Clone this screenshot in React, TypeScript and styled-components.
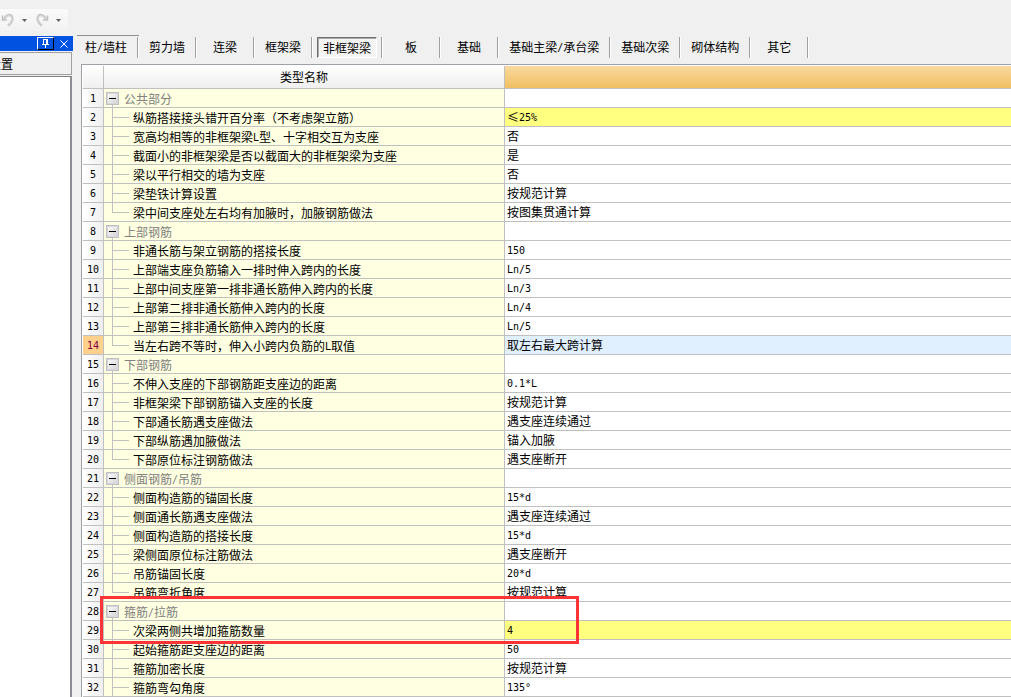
import React from "react";
import styled, { createGlobalStyle, css } from "styled-components";

const line = "#c0c0c0";

const GlobalStyle = createGlobalStyle`
  *, *::before, *::after { box-sizing: border-box; }
  body {
    margin: 0;
    background: #f0f0f0;
    color: #000;
    font: 12px/18px "Noto Sans CJK SC", sans-serif;
  }
  button {
    font: inherit;
    color: inherit;
    margin: 0;
    padding: 0;
    border: 0;
    background: none;
  }
`;

const Page = styled.div`
  display: flex;
  flex-direction: column;
  min-height: 100vh;
  overflow: hidden;
`;

const TopStrip = styled.header`
  height: 35px;
  padding-top: 9px;
`;

const Toolbar = styled.div`
  display: flex;
  align-items: center;
  width: 68px;
  height: 22px;
  background: linear-gradient(#fafafa, #f2f2f2);
  border-radius: 0 2px 2px 0;
`;

const ToolButton = styled.button<{ $narrow?: boolean }>`
  display: flex;
  align-items: center;
  justify-content: center;
  width: ${(p) => (p.$narrow ? 19 : 16)}px;
  height: 22px;
`;

const Body = styled.div`
  display: flex;
  flex: 1;
  gap: 4px;
`;

const SidePanel = styled.aside`
  display: flex;
  flex-direction: column;
  flex: 0 0 73px;
  padding-top: 1px;
`;

const TitleBar = styled.div`
  display: flex;
  justify-content: flex-end;
  align-items: center;
  gap: 4px;
  height: 15px;
  padding-right: 3px;
  background: #0053e1;
`;

const TitleButton = styled.button<{ $boxed?: boolean }>`
  display: flex;
  align-items: center;
  justify-content: center;
  width: ${(p) => (p.$boxed ? 17 : 12)}px;
  height: 13px;
  ${(p) =>
    p.$boxed &&
    css`
      border: 1px solid;
      border-color: #fff #000 #000 #fff;
    `}
`;

const SideHeading = styled.div`
  height: 23px;
  margin: 1px 1px 1px 0;
  border: 1px solid #a0a0a0;
  border-left: 0;
  line-height: 21px;
  overflow: hidden;
  white-space: nowrap;
`;

const SideHeadingText = styled.span`
  display: block;
  margin-left: -11px;
`;

const SideContent = styled.div`
  flex: 1;
  margin-right: 1px;
  background: #fff;
  border-top: 1px solid #808080;
  border-right: 2px solid #8c8c94;
`;

const Main = styled.main`
  display: flex;
  flex-direction: column;
  flex: 1;
  min-width: 0;
`;

const TabBar = styled.nav`
  display: flex;
  height: 29px;
`;

const TabSlot = styled.div<{ $first?: boolean }>`
  display: flex;
  flex: none;
  align-items: flex-start;
  min-width: 58px;
  border-top: 1px solid ${(p) => (p.$first ? "#909098" : "transparent")};
  padding-top: 1px;

  &::after {
    content: "";
    width: 2px;
    height: 21px;
    border-left: 1px solid #a0a0a0;
    border-right: 1px solid #fff;
  }
`;

const Tab = styled.button<{ $active?: boolean; $first?: boolean }>`
  flex: 1;
  height: 20px;
  padding: 0 ${(p) => (p.$first ? "10px 0 8px" : "10px")};
  line-height: 18px;
  white-space: nowrap;
  ${(p) =>
    p.$active &&
    css`
      height: 21px;
      margin: 0 4px;
      padding: 0 5px;
      line-height: 19px;
      border: 1px solid;
      border-color: #707070 #fff #fff #707070;
      box-shadow: inset 1px 1px #a8a8a8;
      background: repeating-conic-gradient(#fff 0 25%, #ececec 0 50%) 0 0 / 2px 2px;
    `}
`;

const GridFrame = styled.section`
  position: relative;
  flex: 1;
  margin-left: 4px;
  padding: 1px 0 0 1px;
  border-top: 1px solid #a0a0a8;
  border-left: 1px solid #a0a0a8;
  background: #fff;
`;

const Grid = styled.table`
  width: 100%;
  table-layout: fixed;
  border-collapse: separate;
  border-spacing: 0;
`;

const cell = css`
  padding: 0;
  border-right: 1px solid ${line};
  border-bottom: 1px solid ${line};
  font-weight: normal;
  white-space: nowrap;
  overflow: hidden;

  &:last-child {
    border-right: 0;
  }
`;

const HeadCell = styled.th<{ $selected?: boolean }>`
  ${cell}
  height: 23px;
  background: ${(p) =>
    p.$selected
      ? "linear-gradient(#f9d99f, #f0c062)"
      : "linear-gradient(#fff, #efefef)"};
`;

const NumberCell = styled.th<{ $selected?: boolean }>`
  ${cell}
  height: 19px;
  line-height: 18px;
  vertical-align: top;
  color: ${(p) => (p.$selected ? "#800040" : "#000")};
  background: ${(p) =>
    p.$selected ? "#ffd08c" : "linear-gradient(90deg, #fff, #efefef)"};
`;

const NameCell = styled.td`
  ${cell}
  background: #ffffe1;
`;

const ValueCell = styled.td<{ $tone?: Tone }>`
  ${cell}
  padding-left: 2px;
  line-height: 18px;
  vertical-align: top;
  background: ${(p) =>
    p.$tone === "changed" ? "#ffff80" : p.$tone === "current" ? "#e0f0ff" : "#fff"};
`;

const TreeItem = styled.div<{ $group?: boolean }>`
  display: flex;
  height: 18px;
  line-height: 19px;
  color: ${(p) => (p.$group ? "#808080" : "#000")};
`;

const Branch = styled.span<{ $last?: boolean }>`
  flex: none;
  width: 17px;
  margin: 0 4px 0 8px;
  background:
    linear-gradient(${line}, ${line}) 0 0 / 1px ${(p) => (p.$last ? "9px" : "100%")} no-repeat,
    linear-gradient(${line}, ${line}) 0 9px / 100% 1px no-repeat;
`;

const Toggle = styled.span`
  display: flex;
  flex-direction: column;
  align-items: center;
  flex: none;
  width: 13px;
  margin: 0 5px 0 2px;
  padding-top: 3px;

  &::after {
    content: "";
    flex: 1;
    width: 1px;
    background: ${line};
  }
`;

const ToggleButton = styled.button`
  display: flex;
  align-items: center;
  justify-content: center;
  width: 13px;
  height: 13px;
  border: 1px solid #c0c0c4;
  box-shadow: inset 0 0 0 1px #d8d8dc;
  background: linear-gradient(135deg, #fff, #d0d0d0);

  &::before {
    content: "";
    width: 7px;
    height: 1px;
    background: #000;
  }
`;

const Latin = styled.span`
  font-family: "DejaVu Sans Mono", monospace;
  font-size: 10px;
  line-height: 10px;
  vertical-align: 1px;
`;

const Highlight = styled.div`
  position: absolute;
  top: 531px;
  left: 18px;
  width: 479px;
  height: 48px;
  border: 3px solid #fb3537;
  pointer-events: none;
`;

type Tone = "changed" | "current";
type Item = { name: string; value?: string; group?: boolean; tone?: Tone };

const tabs = [
  "柱/墙柱", "剪力墙", "连梁\u3000", "框架梁", "非框架梁", "板", "基础",
  "基础主梁/承台梁", "基础次梁", "砌体结构", "其它",
];

const items: Item[] = [
  { name: "公共部分", group: true },
  { name: "纵筋搭接接头错开百分率（不考虑架立筋）", value: "≤25%", tone: "changed" },
  { name: "宽高均相等的非框架梁L型、十字相交互为支座", value: "否" },
  { name: "截面小的非框架梁是否以截面大的非框架梁为支座", value: "是" },
  { name: "梁以平行相交的墙为支座", value: "否" },
  { name: "梁垫铁计算设置", value: "按规范计算" },
  { name: "梁中间支座处左右均有加腋时，加腋钢筋做法", value: "按图集贯通计算" },
  { name: "上部钢筋", group: true },
  { name: "非通长筋与架立钢筋的搭接长度", value: "150" },
  { name: "上部端支座负筋输入一排时伸入跨内的长度", value: "Ln/5" },
  { name: "上部中间支座第一排非通长筋伸入跨内的长度", value: "Ln/3" },
  { name: "上部第二排非通长筋伸入跨内的长度", value: "Ln/4" },
  { name: "上部第三排非通长筋伸入跨内的长度", value: "Ln/5" },
  { name: "当左右跨不等时，伸入小跨内负筋的L取值", value: "取左右最大跨计算", tone: "current" },
  { name: "下部钢筋", group: true },
  { name: "不伸入支座的下部钢筋距支座边的距离", value: "0.1*L" },
  { name: "非框架梁下部钢筋锚入支座的长度", value: "按规范计算" },
  { name: "下部通长筋遇支座做法", value: "遇支座连续通过" },
  { name: "下部纵筋遇加腋做法", value: "锚入加腋" },
  { name: "下部原位标注钢筋做法", value: "遇支座断开" },
  { name: "侧面钢筋/吊筋", group: true },
  { name: "侧面构造筋的锚固长度", value: "15*d" },
  { name: "侧面通长筋遇支座做法", value: "遇支座连续通过" },
  { name: "侧面构造筋的搭接长度", value: "15*d" },
  { name: "梁侧面原位标注筋做法", value: "遇支座断开" },
  { name: "吊筋锚固长度", value: "20*d" },
  { name: "吊筋弯折角度", value: "按规范计算" },
  { name: "箍筋/拉筋", group: true },
  { name: "次梁两侧共增加箍筋数量", value: "4", tone: "changed" },
  { name: "起始箍筋距支座边的距离", value: "50" },
  { name: "箍筋加密长度", value: "按规范计算" },
  { name: "箍筋弯勾角度", value: "135°" },
];

/* Sets half-width runs in the monospace face, half as wide as a Chinese character. */
function Mixed({ text }: { text: string }) {
  return (
    <>
      {text.split(/([\x21-\x7e°]+)/).map((part, i) =>
        i % 2 ? <Latin key={i}>{part}</Latin> : part
      )}
    </>
  );
}

function Arrow() {
  return (
    <svg width="5" height="3" viewBox="0 0 5 3" aria-hidden="true">
      <path d="M0 0h5L2.5 3z" fill="#606060" />
    </svg>
  );
}

function Curl({ flip }: { flip?: boolean }) {
  return (
    <svg width="14" height="14" viewBox="0 0 14 14" aria-hidden="true">
      <g transform={flip ? "matrix(-1 0 0 1 14 0)" : undefined} fill="none">
        <path d="M1.500 2.500v4.500h4.500" stroke="#c0c0c0" strokeWidth="1.500" />
        <path d="M3 6C5 2.500 8.500 1 10.500 3C12.500 5.500 11 9.500 7 12.500" stroke="#c4c4c4" strokeWidth="2.500" />
        <path d="M3.500 5.500C5.500 3 8 2 10 3.500C11.500 5.500 10.500 9 7.500 11.500" stroke="#e6e6e6" />
      </g>
    </svg>
  );
}

export default function App() {
  return (
    <Page lang="zh-CN">
      <GlobalStyle />
      <TopStrip>
        <Toolbar>
          <ToolButton aria-label="撤销"><Curl /></ToolButton>
          <ToolButton $narrow aria-label="撤销列表"><Arrow /></ToolButton>
          <ToolButton aria-label="恢复"><Curl flip /></ToolButton>
          <ToolButton $narrow aria-label="恢复列表"><Arrow /></ToolButton>
        </Toolbar>
      </TopStrip>
      <Body>
        <SidePanel>
          <TitleBar>
            <TitleButton $boxed aria-label="固定">
              <svg width="9" height="9" viewBox="0 0 9 9" aria-hidden="true">
                <path d="M2 .5h5M2.500 0v5M5.500 0v5M6.500 0v5M1 5.500h7M4.500 6v3" stroke="#fff" fill="none" />
              </svg>
            </TitleButton>
            <TitleButton aria-label="关闭">
              <svg width="8" height="8" viewBox="0 0 8 8" aria-hidden="true">
                <path d="M.5 .5l7 7M7.500 .5l-7 7" stroke="#fff" />
              </svg>
            </TitleButton>
          </TitleBar>
          <SideHeading><SideHeadingText>设置</SideHeadingText></SideHeading>
          <SideContent />
        </SidePanel>
        <Main>
          <TabBar>
            {tabs.map((label, i) => (
              <TabSlot key={label} $first={i === 0}>
                <Tab type="button" $first={i === 0} $active={label === "非框架梁"}>
                  <Mixed text={label} />
                </Tab>
              </TabSlot>
            ))}
          </TabBar>
          <GridFrame>
            <Grid>
              <colgroup>
                <col style={{ width: 21 }} />
                <col style={{ width: 401 }} />
                <col />
              </colgroup>
              <thead>
                <tr>
                  <HeadCell />
                  <HeadCell scope="col">类型名称</HeadCell>
                  <HeadCell $selected />
                </tr>
              </thead>
              <tbody>
                {items.map((item, i) => {
                  const next = items[i + 1];
                  return (
                    <tr key={i}>
                      <NumberCell scope="row" $selected={item.tone === "current"}>
                        <Latin>{i + 1}</Latin>
                      </NumberCell>
                      <NameCell>
                        <TreeItem $group={item.group}>
                          {item.group ? (
                            <Toggle><ToggleButton type="button" aria-label="折叠" /></Toggle>
                          ) : (
                            <Branch $last={next?.group} />
                          )}
                          <span><Mixed text={item.name} /></span>
                        </TreeItem>
                      </NameCell>
                      <ValueCell $tone={item.tone}><Mixed text={item.value ?? ""} /></ValueCell>
                    </tr>
                  );
                })}
              </tbody>
            </Grid>
            <Highlight />
          </GridFrame>
        </Main>
      </Body>
    </Page>
  );
}
